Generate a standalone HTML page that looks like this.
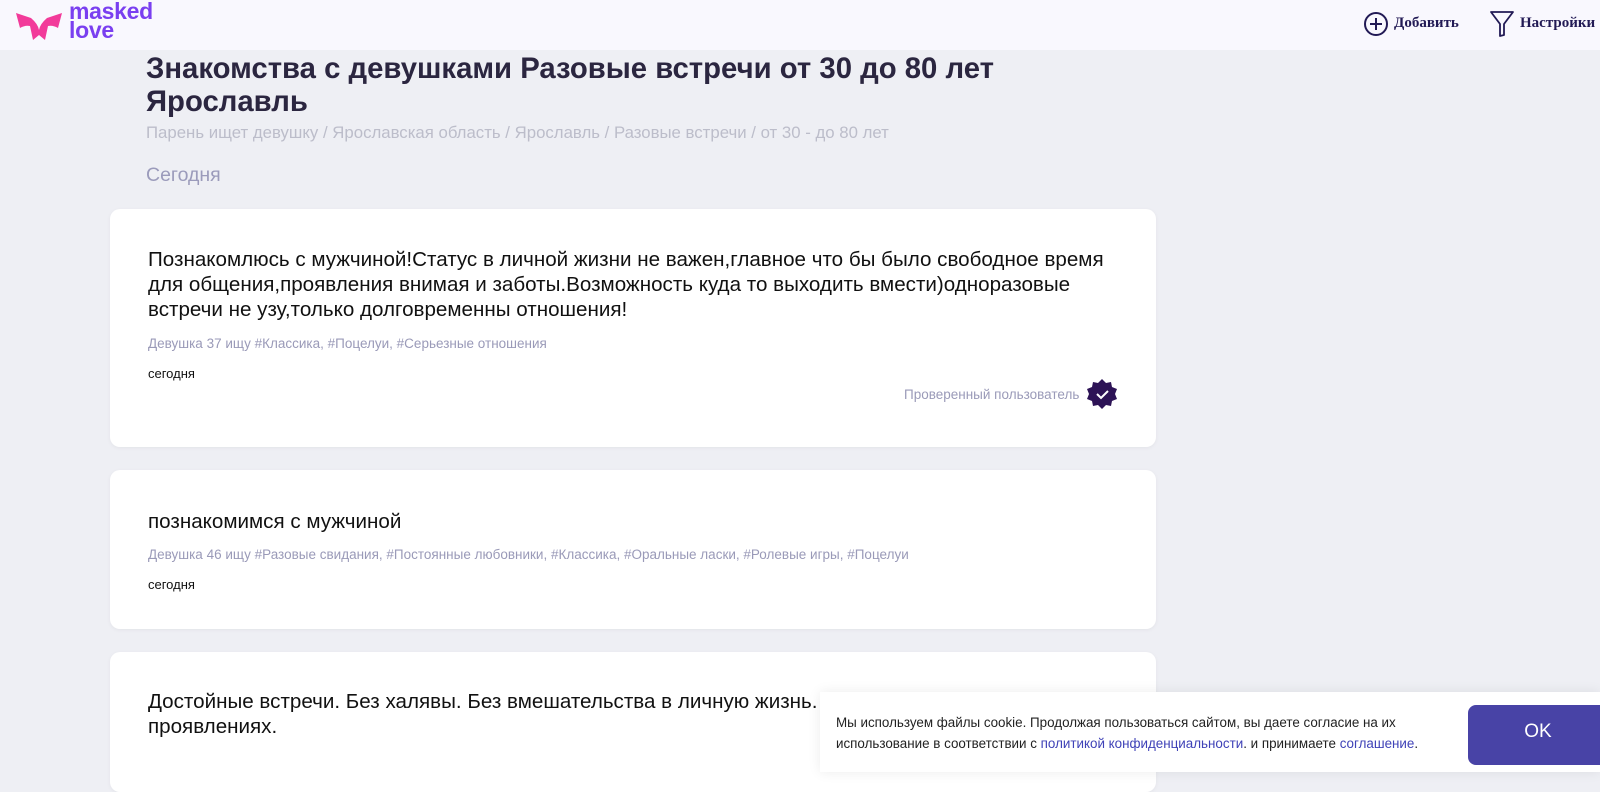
<!DOCTYPE html>
<html><head><meta charset="utf-8"><style>
body{margin:0;width:1600px;height:760px;overflow:hidden;background:#eeeff4;font-family:"Liberation Sans",sans-serif;position:relative}
.hdr{position:absolute;left:0;top:0;width:1600px;height:50px;background:#f9f8fe}
.logo{position:absolute;left:69px;top:2px;color:#7a3ff0;font-weight:bold;font-size:23px;line-height:19px;letter-spacing:-0.3px}
.nav{position:absolute;top:15px;font-family:"Liberation Serif",serif;font-weight:bold;font-size:15px;color:#221a55}
h1{position:absolute;left:146px;top:52px;margin:0;font-size:29.3px;line-height:33px;color:#2b2640;font-weight:bold}
.bc{position:absolute;left:146px;top:123px;font-size:16.8px;color:#bcbdca}
.today{position:absolute;left:146px;top:164px;font-size:19.5px;color:#9b9bbb}
.card{position:absolute;left:110px;width:1046px;background:#fff;border-radius:10px;box-shadow:0 1px 4px rgba(0,0,0,.05)}
.t{position:absolute;left:38px;font-size:20.6px;line-height:25px;color:#111;white-space:nowrap}
.tags{position:absolute;left:38px;font-size:13.5px;color:#9a9ab8;white-space:nowrap}
.d{position:absolute;left:38px;font-size:13px;color:#111}
.ck{position:absolute;left:820px;top:692px;width:780px;height:80px;background:#fff;box-shadow:0 0 12px rgba(0,0,0,.08)}
a{color:#3f42b7;text-decoration:none}
</style></head><body>
<div class="hdr">
<svg style="position:absolute;left:15px;top:10px" width="48" height="32" viewBox="0 0 48 32"><path d="M1 3 L16 8 Q23 14 24 20 Q25 14 32 8 L47 3 L43 18 Q38 15 33 16 L30 30 L24 25 L18 30 L15 16 Q10 15 5 18 Z" fill="#f23b9a"/></svg>
<div class="logo">masked<br>love</div>
<svg style="position:absolute;left:1363px;top:11px" width="26" height="26"><circle cx="13" cy="13" r="11" fill="none" stroke="#221a55" stroke-width="2"/><path d="M13 7v12M7 13h12" stroke="#221a55" stroke-width="2"/></svg>
<div class="nav" style="left:1394px">Добавить</div>
<svg style="position:absolute;left:1489px;top:10px" width="26" height="28"><path d="M2 2h22l-9 12v11l-4 1V14z" fill="none" stroke="#221a55" stroke-width="1.8" stroke-linejoin="round"/></svg>
<div class="nav" style="left:1520px">Настройки</div>
</div>
<h1>Знакомства с девушками Разовые встречи от 30 до 80 лет<br>Ярославль</h1>
<div class="bc">Парень ищет девушку / Ярославская область / Ярославль / Разовые встречи / от 30 - до 80 лет</div>
<div class="today">Сегодня</div>
<div class="card" style="top:209px;height:238px">
<div class="t" style="top:38px">Познакомлюсь с мужчиной!Статус в личной жизни не важен,главное что бы было свободное время<br>для общения,проявления внимая и заботы.Возможность куда то выходить вмести)одноразовые<br>встречи не узу,только долговременны отношения!</div>
<div class="tags" style="top:127px">Девушка 37 ищу #Классика, #Поцелуи, #Серьезные отношения</div>
<div class="d" style="top:157px">сегодня</div>
<div class="tags" style="left:794px;top:178px;font-size:13.5px">Проверенный пользователь</div>
<svg style="position:absolute;left:976px;top:169px" width="32" height="32" viewBox="0 0 32 32"><path d="M16 1l4 4 5-1 1 5 5 2-2 5 2 5-5 2-1 5-5-1-4 4-4-4-5 1-1-5-5-2 2-5-2-5 5-2 1-5 5 1z" fill="#2d1356"/><path d="M11 16l4 4 7-7" fill="none" stroke="#fff" stroke-width="2"/></svg>
</div>
<div class="card" style="top:470px;height:159px">
<div class="t" style="top:39px">познакомимся с мужчиной</div>
<div class="tags" style="top:77px">Девушка 46 ищу #Разовые свидания, #Постоянные любовники, #Классика, #Оральные ласки, #Ролевые игры, #Поцелуи</div>
<div class="d" style="top:107px">сегодня</div>
</div>
<div class="card" style="top:652px;height:140px">
<div class="t" style="top:37px">Достойные встречи. Без халявы. Без вмешательства в личную жизнь. С<br>проявлениях.</div>
</div>
<div class="ck">
<div style="position:absolute;left:16px;top:20px;font-size:13.4px;line-height:21px;color:#222;white-space:nowrap">Мы используем файлы cookie. Продолжая пользоваться сайтом, вы даете согласие на их<br>использование в соответствии с <a>политикой конфиденциальности</a>. и принимаете <a>соглашение</a>.</div>
<div style="position:absolute;left:648px;top:13px;width:140px;height:60px;background:#4843a6;border-radius:8px;color:#fff;font-size:19px;text-align:center;line-height:54px">OK</div>
</div>
</body></html>
